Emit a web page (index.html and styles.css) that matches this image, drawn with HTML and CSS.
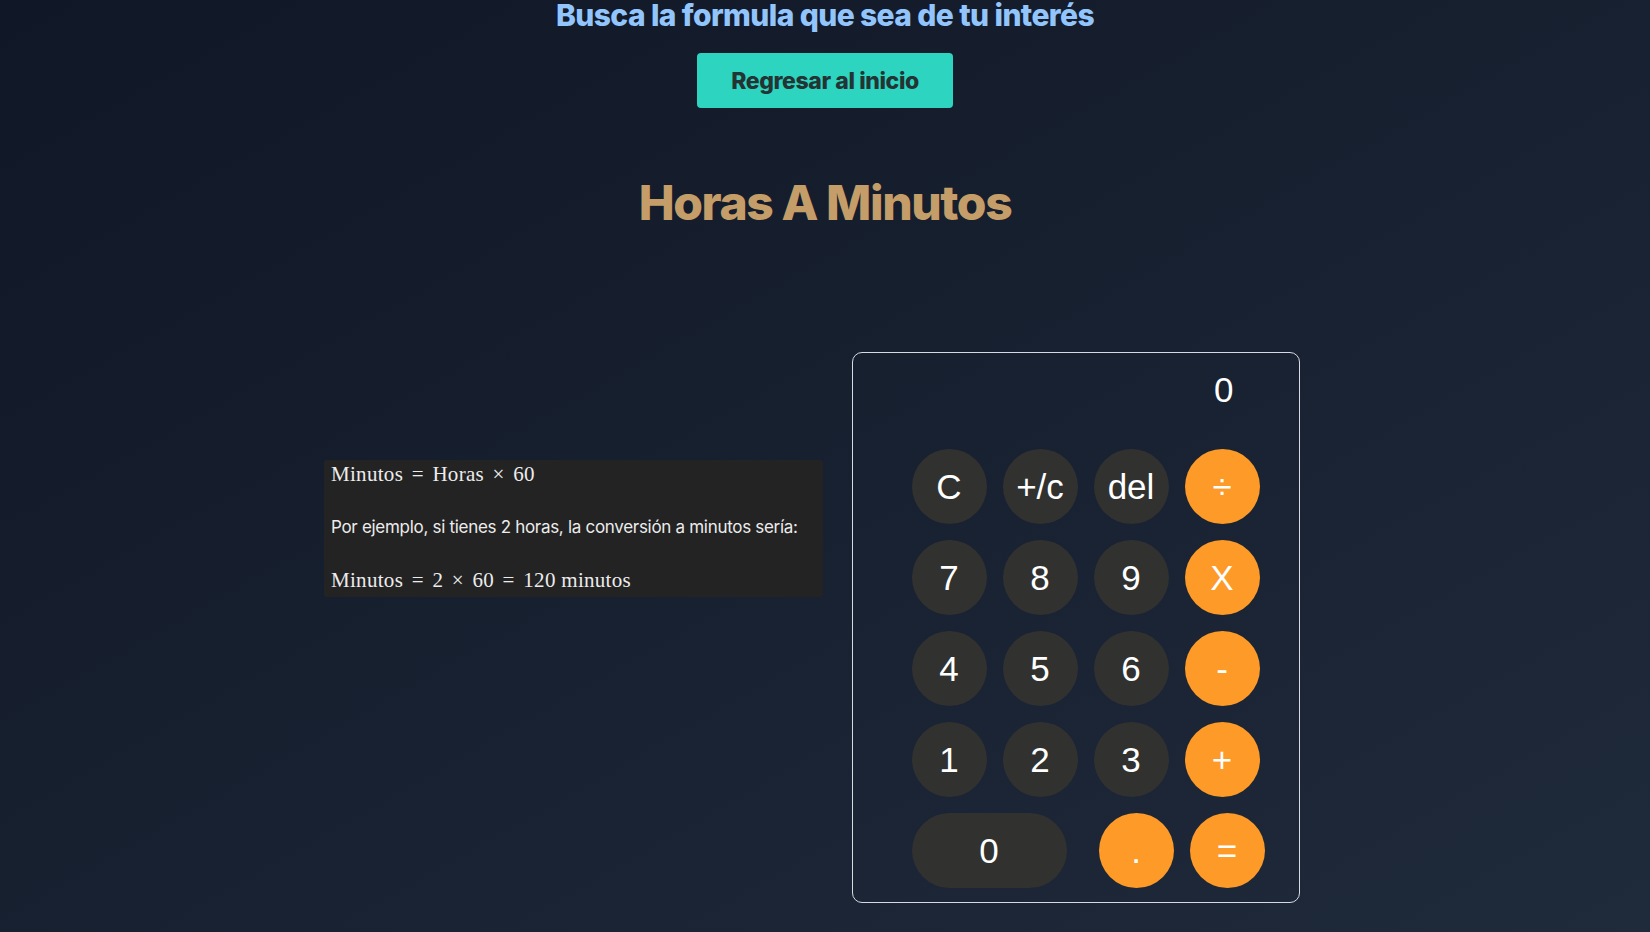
FILE: index.html
```html
<!DOCTYPE html>
<html lang="es">
<head>
<meta charset="utf-8">
<title>Horas A Minutos</title>
<link rel="stylesheet" href="styles.css">
</head>
<body>
<header class="top">
  <h1 class="search-title">Busca la formula que sea de tu interés</h1>
  <a class="home-btn" href="#">Regresar al inicio</a>
  <h2 class="page-title">Horas A Minutos</h2>
</header>
<main class="content">
  <section class="formula">
    <p class="math">Minutos <span class="op">=</span> Horas <span class="op">×</span> 60</p>
    <p class="text">Por ejemplo, si tienes 2 horas, la conversión a minutos sería:</p>
    <p class="math">Minutos <span class="op">=</span> 2 <span class="op">×</span> 60 <span class="op">=</span> 120 minutos</p>
  </section>
  <section class="calc">
    <div class="display">0</div>
    <div class="keys">
      <div class="row">
        <button class="key">C</button>
        <button class="key">+/c</button>
        <button class="key">del</button>
        <button class="key orange">÷</button>
      </div>
      <div class="row">
        <button class="key">7</button>
        <button class="key">8</button>
        <button class="key">9</button>
        <button class="key orange">X</button>
      </div>
      <div class="row">
        <button class="key">4</button>
        <button class="key">5</button>
        <button class="key">6</button>
        <button class="key orange">-</button>
      </div>
      <div class="row">
        <button class="key">1</button>
        <button class="key">2</button>
        <button class="key">3</button>
        <button class="key orange">+</button>
      </div>
      <div class="row">
        <button class="key zero">0</button>
        <button class="key orange">.</button>
        <button class="key orange">=</button>
      </div>
    </div>
  </section>
</main>
</body>
</html>
```

FILE: styles.css
```css
* { box-sizing: border-box; }

html, body {
  margin: 0;
  padding: 0;
  height: 100%;
}

body {
  background: linear-gradient(to bottom right, #101726, #1f2a3a);
  font-family: Inter, "Noto Sans", sans-serif;
  overflow: hidden;
}

.top {
  display: flex;
  flex-direction: column;
  align-items: center;
}

.search-title {
  margin: -3px 0 0;
  font-size: 30px;
  line-height: 36px;
  font-weight: 800;
  color: #93c5fd;
  letter-spacing: -0.6px;
}

.home-btn {
  margin-top: 20px;
  width: 256px;
  height: 55px;
  display: flex;
  align-items: center;
  justify-content: center;
  background: #2dd4bf;
  color: #243333;
  border-radius: 4px;
  font-size: 23px;
  font-weight: 800;
  letter-spacing: -0.4px;
  text-decoration: none;
}

.page-title {
  margin: 70px 0 0;
  font-size: 48px;
  line-height: 50px;
  font-weight: 800;
  color: #c49d69;
  letter-spacing: -1.4px;
}

.content {
  width: 1006px;
  margin: 124px auto 0;
  display: grid;
  grid-template-columns: 503px 503px;
  justify-items: center;
  align-items: start;
}

.formula {
  margin-top: 108px;
  width: 499px;
  background: #232323;
  padding: 0 7px 3px;
  border-radius: 2px;
}

.formula p {
  margin: 0;
  line-height: 28px;
  color: #ececec;
}

.formula p + p {
  margin-top: 25px;
}

.math {
  font-family: "Liberation Serif", "Times New Roman", serif;
  font-size: 21px;
  letter-spacing: 0.3px;
}

.math .op {
  margin: 0 3px;
}

.text {
  font-family: Inter, "Noto Sans", sans-serif;
  font-size: 17px;
  letter-spacing: -0.3px;
}

.calc {
  width: 448px;
  height: 551px;
  margin-left: -2px;
  border: 1px solid #d6dbe3;
  border-radius: 10px;
  padding: 17px 34px 14px 59px;
  font-family: "Liberation Sans", Arial, sans-serif;
}

.display {
  text-align: right;
  padding-right: 31px;
  color: #ffffff;
  font-size: 35px;
  line-height: 40px;
}

.keys {
  margin-top: 39px;
  display: flex;
  flex-direction: column;
  gap: 16px;
}

.row {
  display: flex;
  gap: 16px;
}

.key {
  flex: 0 0 auto;
  width: 75px;
  height: 75px;
  border: none;
  border-radius: 50%;
  background: #313130;
  color: #ffffff;
  font-family: "Liberation Sans", Arial, sans-serif;
  font-size: 35px;
  padding: 0;
  display: flex;
  align-items: center;
  justify-content: center;
}

.key.orange {
  background: #fd9a28;
}

.key.zero {
  width: 155px;
  border-radius: 38px;
  margin-right: 16px;
}
```
